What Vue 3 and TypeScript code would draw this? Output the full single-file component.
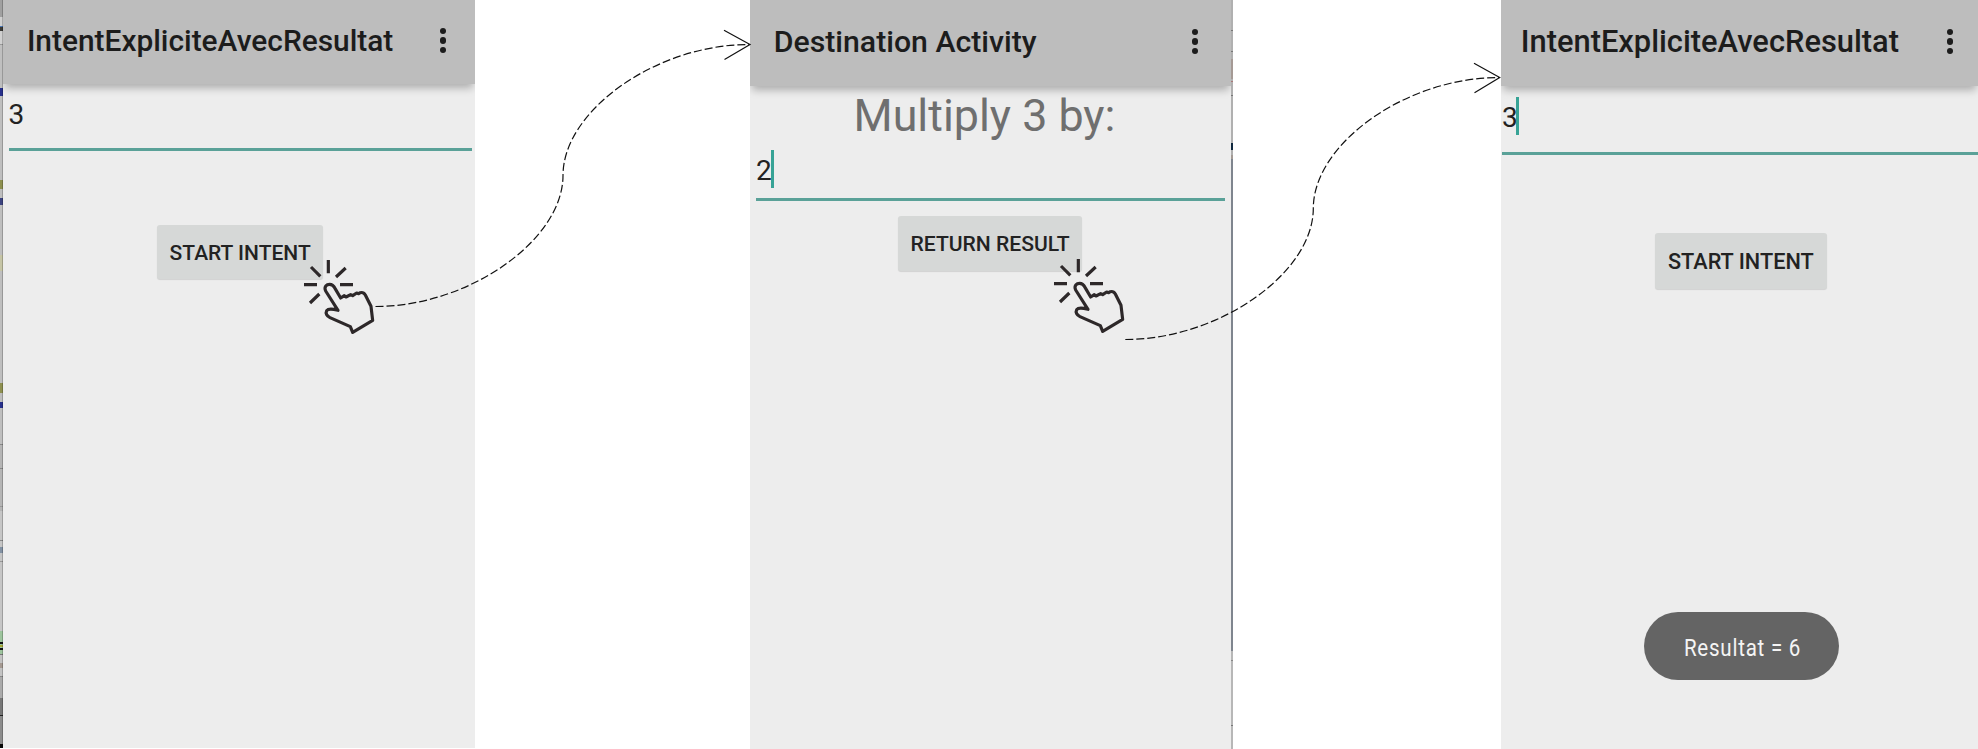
<script setup lang="ts">
interface Sliver { y: number; h: number; color: string }
interface Screen {
  id: string
  title: string
  heading?: string
  value: string
  caret: boolean
  button: string
  toast?: string
}

const screens: Screen[] = [
  { id: 'source', title: 'IntentExpliciteAvecResultat', value: '3', caret: false, button: 'START INTENT' },
  { id: 'destination', title: 'Destination Activity', heading: 'Multiply 3 by:', value: '2', caret: true, button: 'RETURN RESULT' },
  { id: 'result', title: 'IntentExpliciteAvecResultat', value: '3', caret: true, button: 'START INTENT', toast: 'Resultat = 6' },
]

// Slices of the windows that show behind the emulator screens
const leftEdge: Sliver[] = [
  { y: 0, h: 17, color: '#a0a0a0' }, { y: 17, h: 27, color: '#d0d0d0' },
  { y: 26, h: 1, color: '#4a78b8' }, { y: 27, h: 4, color: '#3b3a36' },
  { y: 44, h: 1, color: '#999' }, { y: 45, h: 399, color: '#bfbfbf' },
  { y: 88, h: 8, color: '#27308c' }, { y: 180, h: 9, color: '#8e9050' },
  { y: 198, h: 7, color: '#3c437f' }, { y: 255, h: 16, color: '#c6c5a6' },
  { y: 383, h: 10, color: '#8e9050' }, { y: 402, h: 6, color: '#27308c' },
  { y: 444, h: 1, color: '#888' }, { y: 445, h: 66, color: '#b5b5b5' },
  { y: 468, h: 1, color: '#888' }, { y: 506, h: 1, color: '#999' },
  { y: 511, h: 120, color: '#c6c6c6' }, { y: 540, h: 1, color: '#888' },
  { y: 547, h: 6, color: '#8291a3' }, { y: 561, h: 1, color: '#999' },
  { y: 631, h: 23, color: '#9dc49d' }, { y: 642, h: 2, color: '#111' },
  { y: 645, h: 2, color: '#a8a832' }, { y: 648, h: 2, color: '#111' },
  { y: 654, h: 1, color: '#777' }, { y: 655, h: 21, color: '#c3c3c3' },
  { y: 663, h: 5, color: '#a59a92' }, { y: 676, h: 1, color: '#888' },
  { y: 677, h: 21, color: '#aaa' }, { y: 698, h: 17, color: '#777' },
  { y: 715, h: 1, color: '#222' }, { y: 716, h: 28, color: '#8c8c8c' },
  { y: 744, h: 4, color: '#080808' },
]
const rightEdge: Sliver[] = [
  { y: 0, h: 159, color: '#b0b0b0' }, { y: 30, h: 1, color: '#777' },
  { y: 51, h: 1, color: '#777' }, { y: 59, h: 20, color: '#a59a95' },
  { y: 81, h: 1, color: '#a77' }, { y: 95, h: 1, color: '#777' },
  { y: 143, h: 7, color: '#10283e' }, { y: 155, h: 4, color: '#a39a94' },
  { y: 159, h: 492, color: '#7f858e' }, { y: 651, h: 98, color: '#b7b7b7' },
  { y: 660, h: 1, color: '#888' }, { y: 725, h: 1, color: '#777' },
]

const connectors = [
  { path: 'M375.5 306.5C469 306.5 563 240 563 175.4S656 44.5 749 44.5', head: 'M724 30.3L750 44.4L724.5 59.5' },
  { path: 'M1125.3 339.5C1219 339.5 1313.3 273 1313.3 208.4S1406 77.5 1499 77.5', head: 'M1474 63.3L1499.7 77.5L1474.5 92.7' },
]
const hands = [{ x: 140, y: 210 }, { x: 890, y: 209 }]
</script>

<template>
  <main class="stage">
    <section v-for="s in screens" :key="s.id" class="screen" :class="s.id">
      <header class="bar">
        <h1 class="title">{{ s.title }}</h1>
        <span class="menu"><i /><i /><i /></span>
      </header>
      <p v-if="s.heading" class="heading">{{ s.heading }}</p>
      <div class="field">
        <span class="value">{{ s.value }}</span><span v-if="s.caret" class="caret" />
      </div>
      <button class="action">{{ s.button }}</button>
      <div v-if="s.toast" class="toast"><span>{{ s.toast }}</span></div>
    </section>

    <svg class="overlay" width="1978" height="749" viewBox="0 0 1978 749" fill="none">
      <g shape-rendering="crispEdges">
        <rect v-for="(e, i) in leftEdge" :key="'l' + i" x="0" :y="e.y" width="3" :height="e.h" :fill="e.color" />
        <rect x="2" y="0" width="1" height="748" fill="#000" fill-opacity=".2" />
        <rect v-for="(e, i) in rightEdge" :key="'r' + i" x="1231" :y="e.y" width="2" :height="e.h" :fill="e.color" />
      </g>
      <g v-for="(c, i) in connectors" :key="'c' + i" stroke="#111" stroke-width="1.2">
        <path :d="c.path" stroke-dasharray="8 3" />
        <path :d="c.head" />
      </g>
      <g
        v-for="(h, i) in hands" :key="'h' + i"
        :transform="`translate(${h.x} ${h.y}) scale(.33333)`"
        stroke="#2d2829" stroke-width="9.5"
      >
        <path d="M565 150V190M492 224H531M600 224H639M513 171L541 199M617 174L588 201M538 252L510 279" />
        <path
          stroke-linejoin="round"
          d="M557 243C551 229 560 223 569 223C578 223 582 229 585 235L602 264L613 257L618 261L632 254L638 257L650 249L656 251L661 248C669 246 673 250 676 255L693 289L698 331L638 367L631 350L570 323C560 318 556 310 560 302C565 295 576 296 594 301Z"
        />
      </g>
    </svg>
  </main>
</template>

<style>
body { margin: 0; background: #fff; }
</style>

<style scoped>
.stage {
  position: relative;
  display: grid;
  grid-template-columns: 472px 275px 481px 270px 477px;
  padding-left: 3px;
  width: 1975px;
  height: 749px;
  overflow: hidden;
  font-family: Roboto, sans-serif;
}
.screen {
  --bar: 86px;
  display: flex;
  flex-direction: column;
  background: #ededed;
  overflow: hidden;
  height: 749px;
}
.source { grid-column: 1; --bar: 84px; height: 748px; }
.destination { grid-column: 3; }
.result { grid-column: 5; }

.bar {
  flex: none;
  display: flex;
  align-items: flex-start;
  justify-content: space-between;
  box-sizing: border-box;
  height: var(--bar);
  background: #bdbdbd;
  box-shadow: 0 6px 8px -2px rgba(0, 0, 0, .27);
}
.source .bar { padding: 21px 29.3px 0 23.9px; }
.destination .bar { padding: 22px 33px 0 23.7px; }
.result .bar { padding: 22px 25px 0 19.8px; }
.title {
  margin: 0;
  font-size: 29.88px;
  font-weight: 500;
  line-height: 40px;
  color: #1c1c1c;
  white-space: nowrap;
}
.destination .title { font-size: 30.25px; }
.result .title { font-size: 30.83px; }
.menu { display: flex; flex-direction: column; gap: 3px; padding-top: 7.3px; }
.menu i { width: 6.2px; height: 6.2px; border-radius: 50%; background: #1c1c1c; }

.heading {
  margin: 3px 0 0;
  padding-right: 12px;
  height: 54px;
  line-height: 54px;
  font-size: 44.8px;
  text-align: center;
  white-space: nowrap;
  color: #6f6f6f;
}
.field {
  flex: none;
  display: flex;
  align-items: flex-start;
  box-sizing: border-box;
  border-bottom: 3px solid #5aa198;
  color: #222;
}
.value { width: 14.6px; font-size: 28px; line-height: 38px; }
.caret { width: 3px; height: 38px; background: #37a396; }
.source .field { height: 55px; margin: 12px 3px 0 5.6px; }
.destination .field { height: 50.5px; margin: 7px 6px 0; }
.destination .value { padding-top: 2px; }
.result .field { height: 58px; margin: 11px 0 0 1px; }
.result .value { width: 14.2px; padding-top: 2px; }

.action {
  flex: none;
  box-sizing: border-box;
  border: 0;
  border-radius: 3px;
  padding: 1px 0 0;
  background: #d6d8d7;
  box-shadow: 0 1px 1px rgba(0, 0, 0, .12);
  font: 500 21px/28px Roboto, sans-serif;
  color: #222;
  white-space: nowrap;
}
.source .action { width: 166.3px; height: 54px; margin: 74.3px 0 0 154px; }
.destination .action { width: 184px; height: 55.3px; margin: 15px 0 0 148px; font-size: 21.1px; }
.result .action { width: 171.7px; height: 56px; margin: 77.5px 0 0 154px; font-size: 21.7px; padding: 2px 0 0; }

.toast {
  display: flex;
  align-items: center;
  justify-content: center;
  box-sizing: border-box;
  width: 194.7px;
  height: 67.7px;
  margin: auto 0 69.3px 143px;
  padding: 5px 0 0 2px;
  border-radius: 34px;
  background: #646464;
  color: #f4f4f4;
}
.toast span {
  font-size: 24px;
  line-height: 30px;
  letter-spacing: .9px;
  white-space: nowrap;
  transform: scaleX(.855);
}
.overlay { position: absolute; inset: 0; pointer-events: none; }
</style>
